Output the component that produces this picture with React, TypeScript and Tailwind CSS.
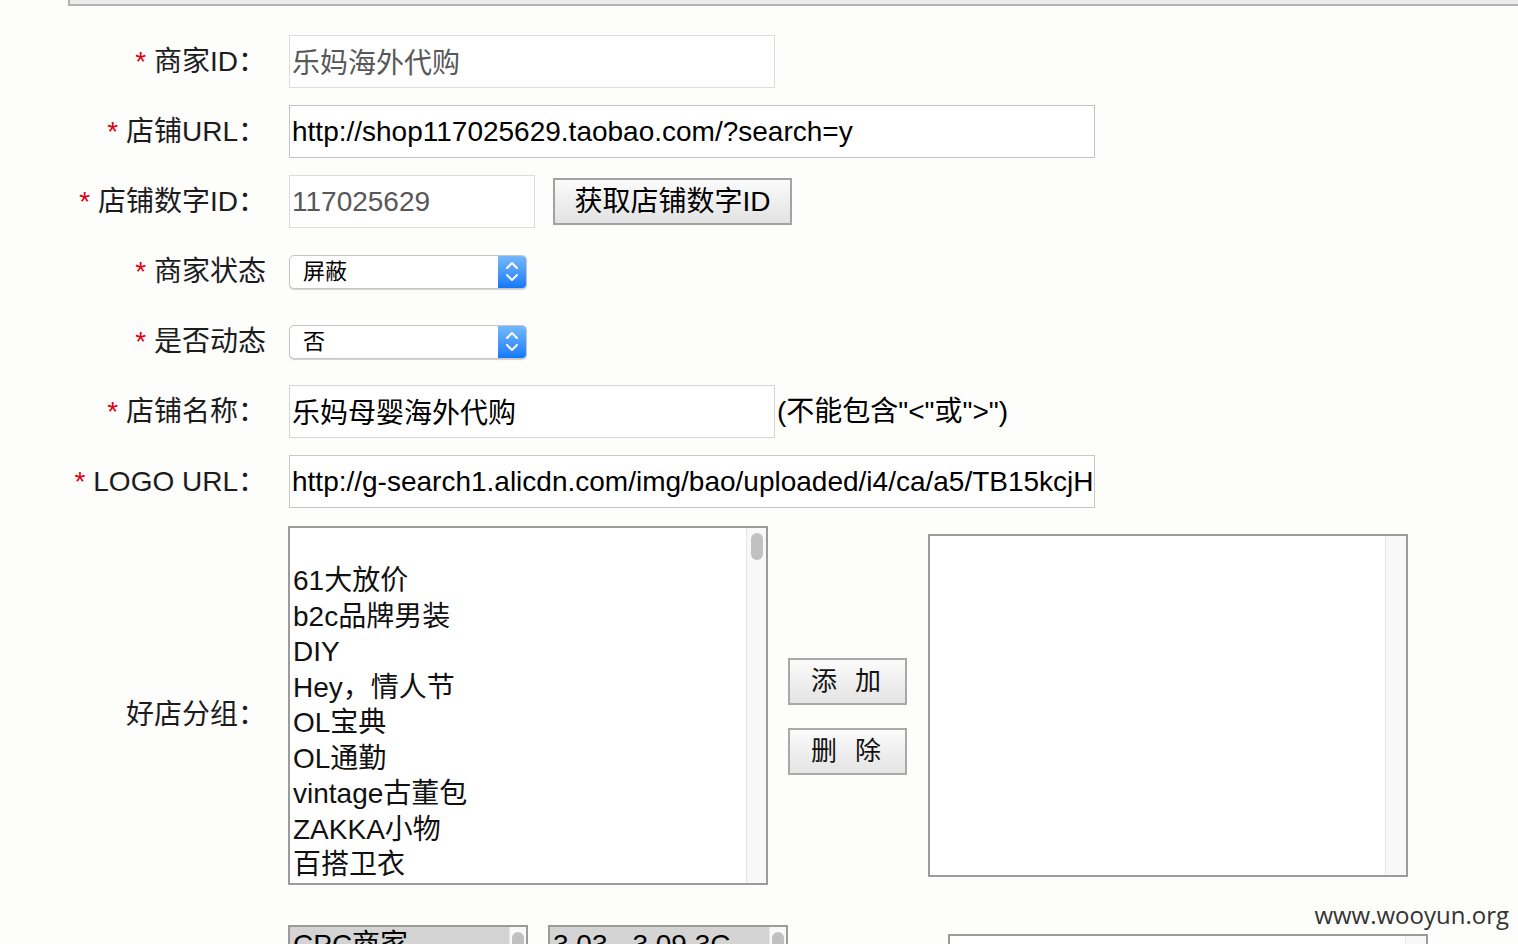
import React from "react";

const groups = [
  "",
  "61大放价",
  "b2c品牌男装",
  "DIY",
  "Hey，情人节",
  "OL宝典",
  "OL通勤",
  "vintage古董包",
  "ZAKKA小物",
  "百搭卫衣",
];

const Label = ({ required, children }: { required?: boolean; children: React.ReactNode }) => (
  <div className="w-[266px] shrink-0 text-right text-[28px] leading-[28px] text-[#1c1c1c]">
    {required && <span className="text-[#e3000f]">* </span>}
    {children}
  </div>
);

const Chevrons = () => (
  <svg width="28" height="32" viewBox="0 0 28 32" fill="none">
    <polyline points="9,12 14,7 19,12" stroke="white" strokeWidth="2" strokeLinecap="round" strokeLinejoin="round" />
    <polyline points="9,19 14,24 19,19" stroke="white" strokeWidth="2" strokeLinecap="round" strokeLinejoin="round" />
  </svg>
);

const Select = ({ value }: { value: string }) => (
  <div className="ml-[23px] flex h-[34px] w-[238px] overflow-hidden rounded-[5px] border border-[#c6c6c6] bg-white shadow-[0_1px_1px_rgba(0,0,0,0.18)]">
    <div className="flex-1 pl-[13px] text-[22px] leading-[32px] text-black">{value}</div>
    <div className="flex w-[28px] items-center justify-center bg-linear-to-b from-[#74b8fc] to-[#0f79f8]">
      <Chevrons />
    </div>
  </div>
);

const Track = ({ thumb, width = 20 }: { thumb?: boolean; width?: number }) => (
  <div
    className="flex shrink-0 justify-center border-l border-[#e6e6e6] bg-[#f8f8f8] pt-[5px]"
    style={{ width }}
  >
    {thumb && <div className="h-[27px] w-[12px] rounded-full bg-[#c1c1c1]" />}
  </div>
);

const App = () => {
  return (
    <div className="relative h-[944px] overflow-hidden bg-[#fdfdfc] font-['Liberation_Sans','Noto_Sans_CJK_SC',sans-serif]">
      {/* top panel edge */}
      <div className="ml-[68px] h-[6px] border-b-2 border-l-2 border-[#b3b3b3] bg-[#ececec]" />

      <div className="flex flex-col gap-[17px] pt-[29px]">
        <div className="flex h-[53px] items-center">
          <Label required>商家ID：</Label>
          <input
            readOnly
            value="乐妈海外代购"
            className="ml-[23px] h-[53px] w-[486px] border border-[#dcdcdc] bg-white px-[2px] pb-[2px] text-[28px] text-[#585858] outline-none"
          />
        </div>

        <div className="flex h-[53px] items-center">
          <Label required>店铺URL：</Label>
          <input
            readOnly
            value="http://shop117025629.taobao.com/?search=y"
            className="ml-[23px] h-[53px] w-[806px] border border-[#c4c4c4] bg-white px-[2px] text-[28px] text-black outline-none"
          />
        </div>

        <div className="flex h-[53px] items-center">
          <Label required>店铺数字ID：</Label>
          <input
            readOnly
            value="117025629"
            className="ml-[23px] h-[53px] w-[246px] border border-[#dcdcdc] bg-white px-[2px] text-[28px] text-[#585858] outline-none"
          />
          <button className="ml-[18px] h-[47px] w-[239px] border-2 border-[#a2a2a2] bg-linear-to-b from-[#fbfbfb] to-[#e2e2e2] text-[28px] text-black">
            获取店铺数字ID
          </button>
        </div>

        <div className="flex h-[53px] items-center">
          <Label required>商家状态</Label>
          <Select value="屏蔽" />
        </div>

        <div className="flex h-[53px] items-center">
          <Label required>是否动态</Label>
          <Select value="否" />
        </div>

        <div className="flex h-[53px] items-center">
          <Label required>店铺名称：</Label>
          <input
            readOnly
            value="乐妈母婴海外代购"
            className="ml-[23px] h-[53px] w-[486px] border border-[#d4d4d4] bg-white px-[2px] pb-[2px] text-[28px] text-black outline-none"
          />
          <span className="ml-[2px] text-[28px] text-black">(不能包含"&lt;"或"&gt;")</span>
        </div>

        <div className="flex h-[53px] items-center">
          <Label required>LOGO URL：</Label>
          <input
            readOnly
            value="http://g-search1.alicdn.com/img/bao/uploaded/i4/ca/a5/TB15kcjH"
            className="ml-[23px] h-[53px] w-[806px] border border-[#c8c8c8] bg-white px-[2px] text-[28px] text-black outline-none"
          />
        </div>

        {/* group selector */}
        <div className="mt-px flex items-start">
          <div className="mt-[175px]">
            <Label>好店分组：</Label>
          </div>
          <div className="ml-[22px] flex h-[359px] w-[480px] overflow-hidden border-2 border-[#9b9b9b] bg-white">
            <ul className="flex-1 pl-[3px] text-[28px] leading-[35.5px] text-[#111]">
              {groups.map((g, i) =>
                i === 0 ? <li key={i} className="h-[35px]" /> : <li key={i}>{g}</li>
              )}
            </ul>
            <Track thumb />
          </div>
          <div className="ml-[20px] mt-[132px] flex flex-col gap-[23px]">
            <button className="flex h-[47px] w-[119px] items-center justify-center gap-[18px] border-2 border-[#a9a9a9] bg-linear-to-b from-[#fbfbfb] to-[#e4e4e4] pr-[3px] text-[26px] text-[#111]">
              <span>添</span>
              <span>加</span>
            </button>
            <button className="flex h-[47px] w-[119px] items-center justify-center gap-[18px] border-2 border-[#a9a9a9] bg-linear-to-b from-[#fbfbfb] to-[#e4e4e4] pr-[3px] text-[26px] text-[#111]">
              <span>删</span>
              <span>除</span>
            </button>
          </div>
          <div className="ml-[21px] mt-[8px] flex h-[343px] w-[480px] border-2 border-[#9b9b9b] bg-white">
            <div className="flex-1" />
            <Track width={21} />
          </div>
        </div>

        {/* next row, cut off by the window */}
        <div className="mt-[23px] flex items-start">
          <div className="w-[266px] shrink-0" />
          <div className="ml-[22px] flex h-[90px] w-[240px] border-2 border-[#9b9b9b] bg-white">
            <div className="flex-1 text-[28px] leading-[35.5px] text-black">
              <div className="bg-[#d4d4d4] pl-[3px]">CPC商家</div>
            </div>
            <Track thumb width={17} />
          </div>
          <div className="ml-[20px] flex h-[90px] w-[240px] border-2 border-[#9b9b9b] bg-white">
            <div className="flex-1 text-[28px] leading-[35.5px] text-black">
              <div className="bg-[#d4d4d4] pl-[3px]">3.03 - 3.09 3C</div>
            </div>
            <Track thumb width={17} />
          </div>
          <div className="ml-[160px] mt-[9px] flex h-[90px] w-[480px] border-2 border-[#9b9b9b] bg-white">
            <div className="flex-1" />
            <Track width={21} />
          </div>
        </div>
      </div>

      {/* watermark */}
      <div className="absolute right-[9px] top-[897px] font-['Open_Sans',sans-serif] text-[24px] text-[#333]">
        www.wooyun.org
      </div>
    </div>
  );
};

export default App;
